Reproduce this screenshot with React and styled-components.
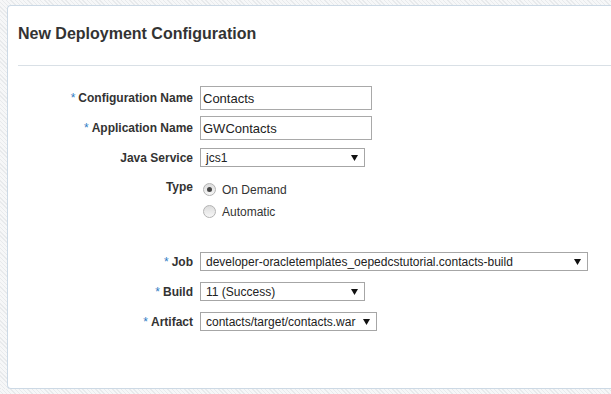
import React from 'react';
import styled, { createGlobalStyle } from 'styled-components';

const GlobalStyle = createGlobalStyle`
  body {
    margin: 0;
    overflow: hidden;
    font-family: "Liberation Sans", Arial, sans-serif;
    background-color: #f6f7f8;
    background-image: repeating-linear-gradient(45deg, #e8eaec 0 1px, transparent 1px 3px);
  }
`;

const Panel = styled.div`
  box-sizing: border-box;
  width: calc(100vw - 7px);
  height: 384px;
  margin: 5px 0 0 7px;
  background: #fff;
  border: 1px solid #ccd9e5;
  border-right: none;
  border-radius: 4px 0 0 4px;
`;

const Header = styled.div`
  margin-left: 10px;
  padding: 18px 0 21px;
  border-bottom: 1px solid #d9e0e6;
`;

const Title = styled.h1`
  margin: 0;
  font-size: 16px;
  line-height: 20px;
  font-weight: bold;
  color: #333;
`;

const Form = styled.div`
  padding-top: 20px;
`;

const Row = styled.div`
  display: grid;
  grid-template-columns: 185px auto;
  column-gap: 7px;
  align-items: ${p => (p.$top ? 'start' : 'center')};
  margin-top: ${p => p.$gap || 0}px;
`;

const Label = styled.label`
  text-align: right;
  font-size: 12px;
  line-height: 16px;
  font-weight: bold;
  color: #333;
`;

const Star = styled.span`
  color: #2f7cc4;
  font-weight: normal;
  margin-right: 3px;
`;

const TextInput = styled.input`
  box-sizing: border-box;
  width: 172px;
  height: 24px;
  padding: 0 2px;
  border: 1px solid #a9a9a9;
  font-family: "Liberation Sans", Arial, sans-serif;
  font-size: 13px;
  color: #222;
  outline: none;
`;

const SelectBox = styled.div`
  box-sizing: border-box;
  display: flex;
  align-items: center;
  justify-content: space-between;
  width: ${p => p.$width}px;
  height: 19px;
  padding: 0 6px 0 5px;
  border: 1px solid #a6a6a6;
  background: #fff;
  font-size: 12px;
  color: #222;
`;

const Arrow = styled.svg`
  width: 7px;
  height: 6px;
  flex: none;
`;

const RadioGroup = styled.div`
  display: flex;
  flex-direction: column;
  padding-left: 3px;
`;

const RadioOption = styled.div`
  display: flex;
  align-items: center;
  height: 22px;
  font-size: 12px;
  color: #333;
`;

const RadioDot = styled.span`
  box-sizing: border-box;
  width: 13px;
  height: 13px;
  margin-right: 6px;
  border-radius: 50%;
  border: 1px solid #b3b3b3;
  background: linear-gradient(#dcdcdc, #f7f7f7);
  display: flex;
  align-items: center;
  justify-content: center;
  margin-top: -2px;
  &::after {
    content: '';
    display: ${p => (p.$checked ? 'block' : 'none')};
    width: 5px;
    height: 5px;
    border-radius: 50%;
    background: #444;
  }
`;

function Select({ width, value }) {
  return (
    <SelectBox $width={width}>
      <span>{value}</span>
      <Arrow viewBox="0 0 7 6">
        <polygon points="0,0 7,0 3.5,6" fill="#111" />
      </Arrow>
    </SelectBox>
  );
}

function Field({ label, required, gap, top, children }) {
  return (
    <Row $gap={gap} $top={top}>
      <Label>
        {required && <Star>*</Star>}
        {label}
      </Label>
      <div>{children}</div>
    </Row>
  );
}

export default function App() {
  return (
    <>
      <GlobalStyle />
      <Panel>
        <Header>
          <Title>New Deployment Configuration</Title>
        </Header>
        <Form>
          <Field label="Configuration Name" required>
            <TextInput defaultValue="Contacts" />
          </Field>
          <Field label="Application Name" required gap={6}>
            <TextInput defaultValue="GWContacts" />
          </Field>
          <Field label="Java Service" gap={8}>
            <Select width={165} value="jcs1" />
          </Field>
          <Field label="Type" gap={12} top>
            <RadioGroup>
              <RadioOption>
                <RadioDot $checked />
                On Demand
              </RadioOption>
              <RadioOption>
                <RadioDot />
                Automatic
              </RadioOption>
            </RadioGroup>
          </Field>
          <Field label="Job" required gap={29}>
            <Select width={388} value="developer-oracletemplates_oepedcstutorial.contacts-build" />
          </Field>
          <Field label="Build" required gap={11}>
            <Select width={165} value="11 (Success)" />
          </Field>
          <Field label="Artifact" required gap={11}>
            <Select width={177} value="contacts/target/contacts.war" />
          </Field>
        </Form>
      </Panel>
    </>
  );
}
